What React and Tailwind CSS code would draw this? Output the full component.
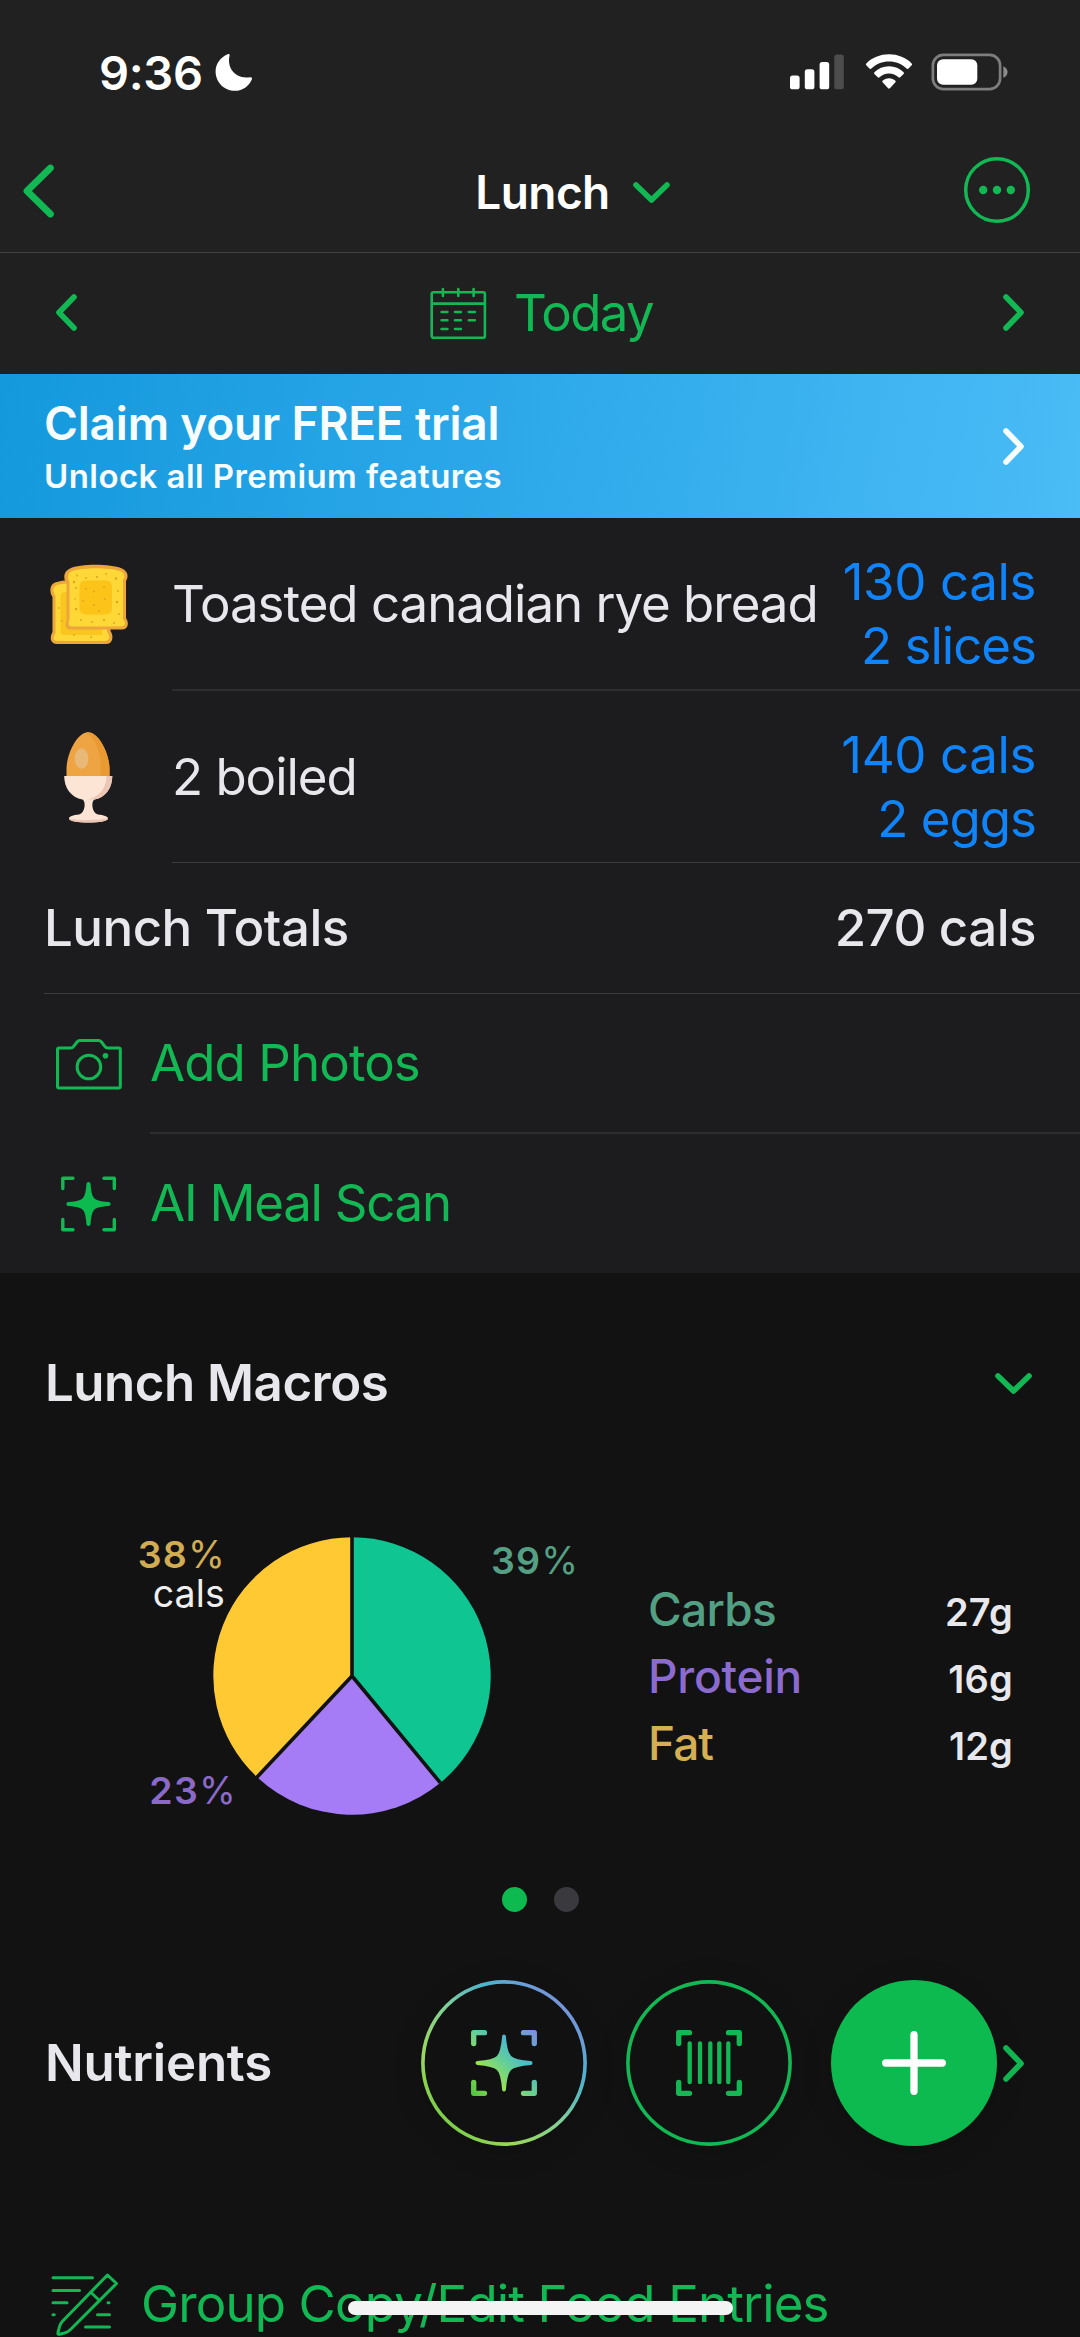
const STAR =
  'M-25.4-2.6C-13-3.6-9.8-5-7.4-7.4C-5-9.8-3.6-13-2.6-25.4A2.6 2.6 0 0 1 2.6-25.4C3.6-13 5-9.8 7.4-7.4C9.8-5 13-3.6 25.4-2.6A2.6 2.6 0 0 1 25.4 2.6C13 3.6 9.8 5 7.4 7.4C5 9.8 3.6 13 2.6 25.4A2.6 2.6 0 0 1-2.6 25.4C-3.6 13-5 9.8-7.4 7.4C-9.8 5-13 3.6-25.4 2.6A2.6 2.6 0 0 1-25.4-2.6Z';

const SLICES = [
  { key: 'carbs', from: 0, to: 0.39, color: '#0fc592' },
  { key: 'protein', from: 0.39, to: 0.62, color: '#a57cf5' },
  { key: 'fat', from: 0.62, to: 1, color: '#ffc934' },
];

function ChevronLeft({ className }) {
  return (
    <svg className={className} viewBox="0 0 21 37" fill="none" stroke="currentColor" strokeWidth="5.6" strokeLinecap="round" strokeLinejoin="round">
      <path d="M18 3L3 18.5L18 34" />
    </svg>
  );
}

function ChevronRight({ className }) {
  return (
    <svg className={className} viewBox="0 0 21 37" fill="none" stroke="currentColor" strokeWidth="5.6" strokeLinecap="round" strokeLinejoin="round">
      <path d="M3 3L18 18.5L3 34" />
    </svg>
  );
}

function ChevronDown({ className }) {
  return (
    <svg className={className} viewBox="0 0 37 21" fill="none" stroke="currentColor" strokeWidth="5.6" strokeLinecap="round" strokeLinejoin="round">
      <path d="M3 3L18.5 18L34 3" />
    </svg>
  );
}

function BackIcon() {
  return (
    <svg className="h-[54px] w-[32px]" viewBox="0 0 32 54" fill="none" stroke="#12b853" strokeWidth="6.8" strokeLinecap="round" strokeLinejoin="round">
      <path d="M27.400 4L4 27L27.400 50" />
    </svg>
  );
}

function MoonIcon() {
  return (
    <svg className="h-[38px] w-[38px]" viewBox="0 0 38 38" fill="#fff">
      <path d="M12.6 1.2C13.8 .6 15 1.200 14.600 2.600C11.600 14.500 20 26.600 35 24.200C36.600 23.900 37.400 24.900 36.900 26.200C34 33.200 27.500 37.800 20 37.800C9.200 37.800 .6 29.300 .6 18.500C.6 10.800 5.400 4.200 12.600 1.200Z" />
    </svg>
  );
}

function SignalIcon() {
  return (
    <svg className="h-[36px] w-[54px]" viewBox="0 0 54 36" fill="#fff">
      <rect x="0" y="21.500" width="9.600" height="13.800" rx="2.600" />
      <rect x="14.800" y="15.200" width="9.600" height="20.100" rx="2.600" />
      <rect x="29.600" y="8" width="9.600" height="27.300" rx="2.600" />
      <rect x="44.300" y=".6" width="9.500" height="34.700" rx="2.600" fill="#4d4d4d" />
    </svg>
  );
}

function WifiIcon() {
  return (
    <svg className="h-[36px] w-[48px]" viewBox="0 0 48 36" fill="#fff">
      <path d="M24 .3C33 .3 41 3.700 46.700 9.400Q47.500 10.300 46.700 11.200L43.300 14.700Q42.500 15.400 41.600 14.600C36.900 10.200 30.800 7.600 24 7.600C17.200 7.600 11.100 10.200 6.400 14.600Q5.500 15.400 4.700 14.700L1.300 11.200Q.5 10.300 1.300 9.400C7 3.700 15 .3 24 .3Z" />
      <path d="M24 12.300C29.700 12.300 34.800 14.500 38.600 18.200Q39.400 19 38.600 19.900L35.200 23.300Q34.400 24 33.500 23.200C31 20.900 27.700 19.500 24 19.500C20.300 19.500 17 20.900 14.500 23.200Q13.600 24 12.800 23.300L9.400 19.900Q8.600 19 9.400 18.200C13.200 14.500 18.300 12.300 24 12.300Z" />
      <path d="M24 24.200C26.600 24.200 28.700 25.100 30.400 26.700Q31.200 27.500 30.400 28.300L24.900 34.200Q24 35.100 23.100 34.200L17.600 28.300Q16.800 27.500 17.600 26.700C19.300 25.100 21.400 24.200 24 24.200Z" />
    </svg>
  );
}

function BatteryIcon() {
  return (
    <svg className="h-[38px] w-[78px]" viewBox="0 0 78 38">
      <rect x="1.900" y="1.900" width="67.200" height="34.200" rx="10.500" fill="none" stroke="#7d7d7d" strokeWidth="2.700" />
      <rect x="6" y="6.200" width="40.300" height="25.600" rx="6" fill="#fff" />
      <path d="M72.300 13.200C74.800 14.100 76.600 16.300 76.600 19C76.600 21.700 74.800 23.900 72.300 24.800Z" fill="#8a8a8a" />
    </svg>
  );
}

function MoreIcon() {
  return (
    <svg className="h-[68px] w-[68px]" viewBox="0 0 68 68" fill="#12b853">
      <circle cx="34" cy="34" r="31.300" fill="none" stroke="#12b853" strokeWidth="3.500" />
      <circle cx="20.200" cy="34" r="4.200" />
      <circle cx="34" cy="34" r="4.200" />
      <circle cx="47.800" cy="34" r="4.200" />
    </svg>
  );
}

function CalendarIcon() {
  return (
    <svg className="h-[52px] w-[57px]" viewBox="0 0 57 52" fill="none" stroke="#12b853" strokeWidth="2.600" strokeLinecap="round">
      <rect x="1.700" y="5.200" width="53.200" height="45.500" rx="1.600" />
      <path d="M2 16.600H55M12.900 2V9M28.300 2V9M43.600 2V9" />
      <path d="M11.600 25H17.400M25 25H30.900M38.800 25H44.900M11.600 33.300H17.400M25 33.300H30.900M38.800 33.300H44.900M11.600 42H17.400M25 42H30.900" />
    </svg>
  );
}

function ToastIcon() {
  return (
    <svg className="mt-[3px] h-[84px] w-[88px]" viewBox="0 0 88 84">
      <path d="M10 20C18 15.500 52 15.500 62 20C69 23 69.500 29 66.500 33V68C70 73 69 81 62 81H13C6 81 5.500 74 8.500 69V34C5 29 6 22 10 20Z" fill="#eda63c" />
      <path d="M13 22C24 19 50 19 60 22C65 24 66 28 63 32V69C67 74 65 78 61 78H14C9 78 8.500 75 11.500 70V33C8 28 9 24 13 22Z" fill="#ffd838" />
      <path d="M21 29H58V72H20C17.500 72 16.500 71 16.500 68V34C16.500 31 18 29 21 29Z" fill="#f9c51f" />
      <path d="M26 5.500C36 .6 66 .6 78 5.500C84.500 8.500 84.500 14 82 18V55C85.500 60 84 66.500 78 66.500H26C21 66.500 20.800 61 22.500 57V20C18.500 15 20 8 26 5.500Z" fill="#eda63c" />
      <path d="M28 8C40 4.200 64 4.200 76 8C81 10 81.500 13.500 79 17V56C82.500 60 81 63.500 77 63.500H28C24 63.500 24 60 25.500 56.500V18.500C22.500 14 24 9.500 28 8Z" fill="#ffd736" />
      <rect x="35.500" y="17.500" width="32.500" height="34" rx="6" fill="#fcc419" />
      <g fill="#dba424">
        <circle cx="30" cy="19" r="1.200" />
        <circle cx="33" cy="12.500" r=".9" />
        <circle cx="42" cy="15" r=".9" />
        <circle cx="53" cy="14" r="1.100" />
        <circle cx="62" cy="11" r=".9" />
        <circle cx="72" cy="15.500" r="1.200" />
        <circle cx="74" cy="28" r=".9" />
        <circle cx="73" cy="39" r="1.200" />
        <circle cx="75" cy="51" r=".9" />
        <circle cx="32" cy="25" r="1" />
        <circle cx="31" cy="36" r=".8" />
        <circle cx="32" cy="46" r="1.200" />
        <circle cx="37" cy="57" r="1" />
        <circle cx="48" cy="59" r=".9" />
        <circle cx="60" cy="57" r="1.100" />
        <circle cx="70" cy="60" r=".9" />
        <circle cx="42" cy="26" r=".9" />
        <circle cx="50" cy="28.500" r="1.100" />
        <circle cx="60" cy="24" r=".9" />
        <circle cx="39" cy="38" r=".9" />
        <circle cx="50" cy="42" r="1.100" />
        <circle cx="61" cy="36" r="1" />
        <circle cx="55" cy="48" r=".9" />
        <circle cx="15" cy="45" r=".9" />
        <circle cx="18" cy="58" r=".9" />
        <circle cx="30" cy="72" r=".9" />
        <circle cx="47" cy="74" r=".9" />
      </g>
    </svg>
  );
}

function EggIcon() {
  return (
    <svg className="h-[92px] w-[88px]" viewBox="0 0 88 92">
      <path d="M44 1.200C33 1.200 22.500 23 22.500 38V46H65.500V38C65.500 23 55 1.200 44 1.200Z" fill="#eea443" />
      <path d="M44 1.200C55 1.200 65.500 23 65.500 38V46H56C59 30 54 8 42 1.500Z" fill="#e99a30" />
      <ellipse cx="37.500" cy="27.500" rx="6.800" ry="10.200" fill="#e8b878" />
      <path d="M20.200 45H68.300C68.300 57 61.500 66.500 50.500 68.500C47 70 47.500 82 54 83.500C59.500 84 64 85.500 64 87.500C64 90.200 55.500 91.500 44.500 91.500C33.500 91.500 25 90.200 25 87.500C25 85.500 29 84 35 83.500C41.500 82 42 70 38.500 68.500C27 66.500 20.200 57 20.200 45Z" fill="#fde5d6" />
      <path d="M62.500 45H68.300C68.300 57 61.500 66.500 50.500 68.500H43C55 66.500 62.500 57 62.500 45Z" fill="#edc5b4" />
      <path d="M25 87.500C30 89.500 57 89.500 64 87C64 90.200 55.500 91.500 44.500 91.500C33.500 91.500 25 90.200 25 87.500Z" fill="#edc5b4" />
    </svg>
  );
}

function CameraIcon() {
  return (
    <svg className="mt-[2px] h-[52px] w-[68px]" viewBox="0 0 68 52" fill="none" stroke="#12b853" strokeWidth="3" strokeLinejoin="round">
      <path d="M2.500 11.500Q2.500 10 4 10H15.500Q17.500 10 18.700 8.300L22 4Q23.200 2.500 25 2.500H43.500Q45.300 2.500 46.500 4L49.800 8.300Q51 10 53 10H63.800Q65.300 10 65.300 11.500V48.500Q65.300 50 63.800 50H4Q2.500 50 2.500 48.500Z" />
      <circle cx="33.900" cy="29" r="11.800" />
      <circle cx="50.500" cy="17.700" r="2.800" fill="#12b853" stroke="none" />
    </svg>
  );
}

function MealScanIcon() {
  return (
    <svg className="h-[56px] w-[68px]" viewBox="0 0 68 56" fill="none" stroke="#12b853" strokeWidth="3.400" strokeLinecap="round" strokeLinejoin="round">
      <path d="M7.800 12.500V2.200H18M49 2.200H59.300V12.500M59.300 43.500V53.800H49M18 53.800H7.800V43.500" />
      <path d={STAR} transform="translate(33.500 28) scale(.79)" fill="#0cba50" stroke="none" />
    </svg>
  );
}

function EditListIcon() {
  return (
    <svg className="h-[65px] w-[70px]" viewBox="0 0 70 65" fill="none" stroke="#12b853" strokeWidth="3" strokeLinecap="round" strokeLinejoin="round">
      <path d="M3 5.700H42.500M3 18.500H29.500M3 30.700H17M3 42.700H4.200M58 30.700H59M47.500 42.700H59.500M35.500 55H59.500" />
      <path d="M57.500 3L66.500 11.500L20.500 57.500Q18 60 14.500 61L9.500 62.300Q7.500 62.800 8 60.500L9.500 54.500Q10.300 51.500 12.500 49.200Z" />
      <path d="M41 20.500L49.500 28.500" />
    </svg>
  );
}

function AiScanGlyph() {
  return (
    <svg className="h-[166px] w-[166px]" viewBox="0 0 166 166" fill="none">
      <defs>
        <linearGradient id="aiRing" gradientUnits="userSpaceOnUse" x1="0" y1="166" x2="166" y2="0">
          <stop offset="0" stopColor="#5cc437" />
          <stop offset=".28" stopColor="#9bd858" />
          <stop offset=".5" stopColor="#7fcf9c" />
          <stop offset=".68" stopColor="#4cb4cc" />
          <stop offset=".85" stopColor="#7595da" />
          <stop offset="1" stopColor="#8a8ae0" />
        </linearGradient>
        <linearGradient id="aiGlyph" gradientUnits="userSpaceOnUse" x1="50" y1="116" x2="116" y2="50">
          <stop offset="0" stopColor="#4cc23c" />
          <stop offset=".3" stopColor="#96e05a" />
          <stop offset=".5" stopColor="#66cf94" />
          <stop offset=".66" stopColor="#4cbfc4" />
          <stop offset="1" stopColor="#848ae0" />
        </linearGradient>
      </defs>
      <circle cx="83" cy="83" r="81.100" stroke="url(#aiRing)" strokeWidth="3.600" />
      <path d="M52.700 63.500V52.700H63.500M102.500 52.700H113.300V63.500M113.300 102.500V113.300H102.500M63.500 113.300H52.700V102.500" stroke="url(#aiGlyph)" strokeWidth="5.300" strokeLinecap="round" strokeLinejoin="round" />
      <path d="M55 83C68 82 74 80 77 77C80 74 82 68 83 55C84 68 86 74 89 77C92 80 98 82 111 83C98 84 92 86 89 89C86 92 84 98 83 111C82 98 80 92 77 89C74 86 68 84 55 83Z" transform="translate(4.150 4.150) scale(.95)" fill="url(#aiGlyph)" stroke="url(#aiGlyph)" strokeWidth="4" strokeLinejoin="round" />
    </svg>
  );
}

function BarcodeGlyph() {
  return (
    <svg className="h-[166px] w-[166px]" viewBox="0 0 166 166" fill="none" stroke="#12b853" strokeLinecap="round" strokeLinejoin="round">
      <circle cx="83" cy="83" r="81.100" strokeWidth="3.600" />
      <path d="M52.700 63.500V52.700H63.500M102.500 52.700H113.300V63.500M113.300 102.500V113.300H102.500M63.500 113.300H52.700V102.500" strokeWidth="5.300" />
      <path d="M63.700 63.300V102.200M74 63.300V102.200M84.300 63.300V102.200M93.300 63.300V102.200M102.300 63.300V102.200" strokeWidth="4.300" />
    </svg>
  );
}

function PlusGlyph() {
  return (
    <svg className="h-[66px] w-[66px]" viewBox="0 0 66 66" fill="none" stroke="#fff" strokeWidth="7.300" strokeLinecap="round">
      <path d="M33 4.700V61.300M4.700 33H61.300" />
    </svg>
  );
}

function slicePath(from, to) {
  const c = 140;
  const r = 138.7;
  const point = (t) => {
    const a = t * Math.PI * 2;
    return `${c + r * Math.sin(a)} ${c - r * Math.cos(a)}`;
  };
  return `M${c} ${c}L${point(from)}A${r} ${r} 0 ${to - from > 0.5 ? 1 : 0} 1 ${point(to)}Z`;
}

function MacroPie() {
  return (
    <svg className="-ml-[13px] h-[280px] w-[280px] shrink-0" viewBox="0 0 280 280">
      {SLICES.map((s) => (
        <path key={s.key} d={slicePath(s.from, s.to)} fill={s.color} />
      ))}
      <path d="M140 0V140L228.400 246.900M140 140L44.200 242" fill="none" stroke="#121212" strokeWidth="3.600" />
    </svg>
  );
}

function FoodRow({ icon, name, cals, amount }) {
  return (
    <div className="flex h-[171px] pr-[44px] pl-[44px]">
      <div className="flex w-[128px] items-center">{icon}</div>
      <div className="flex flex-1 items-center text-[51px] leading-[64px] tracking-[-1.02px] whitespace-nowrap">{name}</div>
      <div className="pt-[32px] text-right text-[51px] leading-[64px] text-[#0f84fb]">
        <p className="tracking-[-0.38px]">{cals}</p>
        <p className="tracking-[-0.98px]">{amount}</p>
      </div>
    </div>
  );
}

function LegendRow({ label, value, labelClass }) {
  return (
    <div className="flex h-[67px] items-baseline justify-between font-semibold">
      <span className={labelClass}>{label}</span>
      <span className="text-[38px] leading-none tracking-[0.2px]">{value}</span>
    </div>
  );
}

export default function App() {
  return (
    <div className="relative flex h-[2337px] w-[1080px] flex-col overflow-hidden bg-[#121212] font-['Inter',sans-serif] text-[#e8e7ec]">
      <header className="bg-[#212121]">
        <div className="flex h-[132px] items-center justify-between pt-[12px] pr-[71px] pl-[99px]">
          <div className="flex items-center gap-[12px]">
            <span className="text-[47px] leading-none font-semibold tracking-[-0.35px] text-white">9:36</span>
            <MoonIcon />
          </div>
          <div className="flex items-center">
            <SignalIcon />
            <div className="ml-[21px]">
              <WifiIcon />
            </div>
            <div className="ml-[18px]">
              <BatteryIcon />
            </div>
          </div>
        </div>

        <div className="grid h-[121px] grid-cols-[1fr_auto_1fr] items-center border-b border-[#3f4240] pr-[49px] pl-[23px]">
          <div className="pb-[3px]">
            <BackIcon />
          </div>
          <div className="ml-[91px] flex items-center gap-[23px]">
            <span className="text-[46px] leading-none font-semibold tracking-[-0.58px] text-white">Lunch</span>
            <ChevronDown className="h-[21px] w-[37px] text-[#12b853]" />
          </div>
          <div className="flex justify-end pb-[4px]">
            <MoreIcon />
          </div>
        </div>
      </header>

      <div className="flex h-[121px] items-center justify-between bg-[#202020] pr-[56px] pb-[2px] pl-[56px] text-[#12b853]">
        <ChevronLeft className="h-[37px] w-[21px]" />
        <div className="ml-[3px] flex items-center gap-[27px]">
          <CalendarIcon />
          <span className="text-[51px] leading-none tracking-[-1.63px]">Today</span>
        </div>
        <ChevronRight className="h-[37px] w-[21px]" />
      </div>

      <div className="flex h-[144px] items-center justify-between bg-linear-[100deg,#1499dd,#2ea9ea_50%,#4abcf6] pr-[56px] pl-[44px] font-semibold text-[#f8fdff]">
        <div className="pt-[5px]">
          <p className="text-[46px] leading-[55px] tracking-[-0.19px]">Claim your FREE trial</p>
          <p className="text-[33px] leading-[50px] tracking-[0.43px]">Unlock all Premium features</p>
        </div>
        <ChevronRight className="h-[37px] w-[21px]" />
      </div>

      <section className="flex flex-col bg-[#1c1c1e]">
        <FoodRow icon={<ToastIcon />} name="Toasted canadian rye bread" cals="130 cals" amount="2 slices" />
        <div className="ml-[172px] h-[2px] bg-[#2d2d2f]" />
        <FoodRow icon={<EggIcon />} name="2 boiled" cals="140 cals" amount="2 eggs" />
        <div className="ml-[172px] h-px bg-[#3b3b3e]" />
        <div className="flex h-[130px] items-center justify-between pr-[44px] pl-[44px] text-[51px] font-medium tracking-[-0.52px]">
          <span>Lunch Totals</span>
          <span>270 cals</span>
        </div>
        <div className="ml-[44px] h-px bg-[#3b3b3e]" />
        <div className="flex h-[138px] items-center pl-[55px] text-[51px] tracking-[-0.91px] text-[#12b853]">
          <CameraIcon />
          <span className="ml-[27px]">Add Photos</span>
        </div>
        <div className="ml-[150px] h-[2px] bg-[#2d2d2f]" />
        <div className="flex h-[139px] items-center pl-[55px] text-[51px] tracking-[-1.27px] text-[#12b853]">
          <MealScanIcon />
          <span className="ml-[27px]">AI Meal Scan</span>
        </div>
      </section>

      <section className="flex flex-col">
        <div className="flex h-[220px] items-center justify-between pr-[48px] pl-[45px]">
          <h2 className="text-[51px] font-semibold tracking-[-0.5px]">Lunch Macros</h2>
          <ChevronDown className="h-[21px] w-[37px] text-[#12b853]" />
        </div>

        <div className="flex h-[323px] pt-[43px]">
          <div className="flex w-[225px] shrink-0 flex-col items-end text-[37.5px] leading-[38px]">
            <p className="-mr-px font-semibold tracking-[1.2px] text-[#d2ac52]">
              38<span className="font-normal">%</span>
            </p>
            <p className="pt-px tracking-[0.16px] text-[#efeff0]">cals</p>
            <p className="mt-auto -mr-[12px] mb-[6px] font-semibold tracking-[1.2px] text-[#8a69c9]">
              23<span className="font-normal">%</span>
            </p>
          </div>
          <MacroPie />
          <p className="-ml-px w-[157px] shrink-0 pt-[6px] text-[37.5px] leading-[38px] font-semibold tracking-[1.2px] text-[#55a084]">
            39<span className="font-normal">%</span>
          </p>
          <div className="flex w-[365px] flex-col justify-center">
            <LegendRow label="Carbs" value="27g" labelClass="text-[46px] leading-[67px] font-medium tracking-[-0.68px] text-[#52a083]" />
            <LegendRow label="Protein" value="16g" labelClass="text-[46px] leading-[67px] font-medium tracking-[-0.25px] text-[#8c6bd0]" />
            <LegendRow label="Fat" value="12g" labelClass="text-[46px] leading-[67px] font-medium tracking-[-0.96px] text-[#d4b052]" />
          </div>
        </div>

        <div className="mt-[71px] flex justify-center gap-[27px]">
          <span className="h-[25px] w-[25px] rounded-full bg-[#0cba50]" />
          <span className="h-[25px] w-[25px] rounded-full bg-[#3a393e]" />
        </div>
      </section>

      <section className="relative flex h-[302px] shrink-0 items-center justify-between pr-[56px] pl-[45px]">
        <h2 className="text-[51px] font-semibold tracking-[-0.22px]">Nutrients</h2>
        <ChevronRight className="h-[37px] w-[21px] text-[#12b853]" />
        {/* floating actions */}
        <div className="absolute top-[68px] right-[83px] flex gap-[39px]">
          <button className="rounded-full bg-[#111111] shadow-[0_6px_30px_rgba(0,0,0,0.15)]">
            <AiScanGlyph />
          </button>
          <button className="rounded-full bg-[#111111] shadow-[0_6px_30px_rgba(0,0,0,0.15)]">
            <BarcodeGlyph />
          </button>
          <button className="flex h-[166px] w-[166px] items-center justify-center rounded-full bg-[#0cba50] shadow-[0_6px_30px_rgba(0,0,0,0.15)]">
            <PlusGlyph />
          </button>
        </div>
      </section>

      <div className="flex shrink-0 items-start pt-[58px] pl-[50px] text-[#12b853]">
        <EditListIcon />
        <span className="ml-[21px] pt-px text-[51px] leading-[61px] tracking-[-0.85px] whitespace-nowrap">Group Copy/Edit Food Entries</span>
      </div>

      {/* home indicator */}
      <div className="absolute bottom-[22px] left-[348px] h-[14px] w-[385px] rounded-full bg-[#f4f4f4]" />
    </div>
  );
}
